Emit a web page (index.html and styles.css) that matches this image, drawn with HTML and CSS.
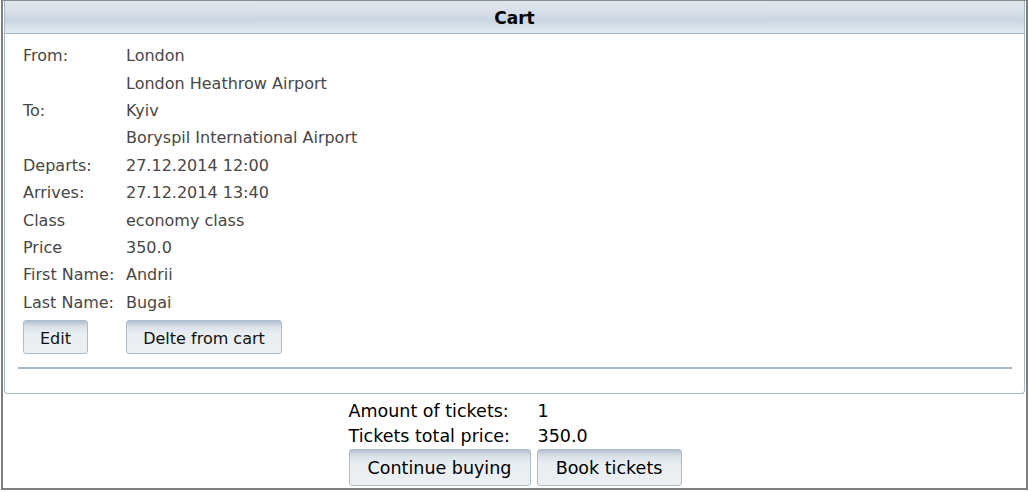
FILE: index.html
```html
<!DOCTYPE html>
<html>
<head>
<meta charset="utf-8">
<link rel="stylesheet" href="styles.css">
</head>
<body>
<div class="frame">
  <div class="panel">
    <div class="panel-header">Cart</div>
    <div class="panel-body">
      <div class="details">
        <div class="lbl">From:</div><div class="val">London</div>
        <div class="lbl"></div><div class="val">London Heathrow Airport</div>
        <div class="lbl">To:</div><div class="val">Kyiv</div>
        <div class="lbl"></div><div class="val">Boryspil International Airport</div>
        <div class="lbl">Departs:</div><div class="val">27.12.2014 12:00</div>
        <div class="lbl">Arrives:</div><div class="val">27.12.2014 13:40</div>
        <div class="lbl">Class</div><div class="val">economy class</div>
        <div class="lbl">Price</div><div class="val">350.0</div>
        <div class="lbl">First Name:</div><div class="val">Andrii</div>
        <div class="lbl">Last Name:</div><div class="val">Bugai</div>
      </div>
      <div class="item-actions">
        <button class="btn btn-edit">Edit</button>
        <button class="btn btn-del">Delte from cart</button>
      </div>
      <div class="separator"></div>
    </div>
  </div>
  <div class="summary">
    <div class="totals">
      <div class="tlbl">Amount of tickets:</div><div class="tval">1</div>
      <div class="tlbl">Tickets total price:</div><div class="tval">350.0</div>
    </div>
    <div class="summary-actions">
      <button class="btn btn-big btn-continue">Continue buying</button>
      <button class="btn btn-big btn-book">Book tickets</button>
    </div>
  </div>
</div>
</body>
</html>
```
FILE: styles.css
```css
html, body {
  margin: 0;
  padding: 0;
  background: #ffffff;
}
body {
  font-family: "DejaVu Sans", Verdana, sans-serif;
}
.frame {
  box-sizing: border-box;
  width: 1027px;
  height: 490px;
  margin-left: 1px;
  border-left: 2px solid #7f7f7f;
  border-right: 2px solid #7f7f7f;
  border-bottom: 2px solid #7f7f7f;
  border-top: 1px solid #8a8a8a;
  padding: 0 0 0 1px;
}
.panel {
  width: 1021px;
  border: 1px solid #a7b7c7;
  border-top: none;
  border-radius: 0 0 4px 4px;
  box-sizing: border-box;
}
.panel-header {
  height: 32px;
  line-height: 35px;
  text-align: center;
  font-weight: bold;
  font-size: 17px;
  color: #000;
  border-bottom: 1px solid #a3b3c3;
  background: linear-gradient(to bottom, #e3e8ef 0%, #d7dfe8 35%, #c9d5e1 60%, #d8e2ec 80%, #e2eaf3 100%);
}
.panel-body {
  padding: 8px 12px 24px 13px;
}
.details {
  display: grid;
  grid-template-columns: 103px auto;
  grid-auto-rows: 27.4px;
  padding-left: 5px;
  font-size: 16px;
  color: #474747;
  align-items: center;
}
.item-actions {
  display: flex;
  gap: 38px;
  padding-left: 5px;
  margin-top: 4px;
}
.btn {
  font-family: "DejaVu Sans", Verdana, sans-serif;
  font-size: 16px;
  color: #111;
  border: 1px solid #aebdcc;
  border-radius: 3px;
  background: linear-gradient(to bottom, #b3c1cf 0%, #d9e1e9 18%, #e9eef2 40%, #ecf0f3 100%);
  padding: 3px 0 0 0;
  height: 34px;
  cursor: pointer;
}
.btn-edit { width: 65px; }
.btn-del { width: 156px; }
.separator {
  height: 2px;
  background: #a9b9c9;
  margin-top: 13px;
}
.summary {
  display: flex;
  flex-direction: column;
  align-items: center;
  padding-top: 5px;
}
.totals {
  display: grid;
  grid-template-columns: 189px 144px;
  grid-auto-rows: 25px;
  align-items: center;
  font-size: 17.5px;
  color: #000;
  width: 333px;
}
.summary-actions {
  display: flex;
  gap: 6px;
  width: 333px;
}
.btn-big {
  height: 37px;
  font-size: 17.5px;
  color: #000;
  padding-top: 2px;
}
.btn-continue { width: 182px; }
.btn-book { width: 145px; }
```
